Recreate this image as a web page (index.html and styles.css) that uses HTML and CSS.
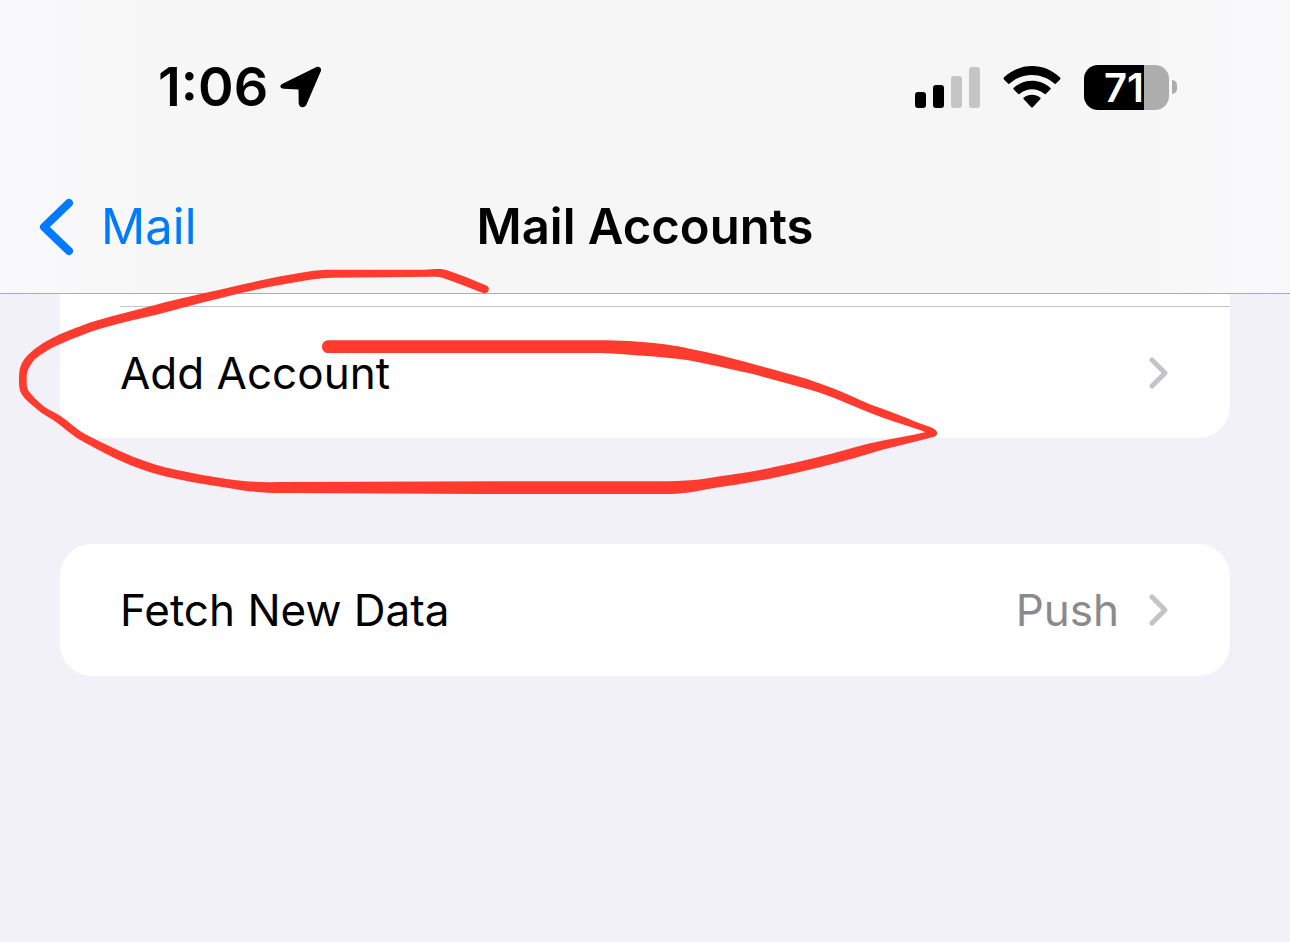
FILE: index.html
```html
<!DOCTYPE html>
<html lang="en">
<head>
    <meta charset="UTF-8">
    <meta name="viewport" content="width=device-width, initial-scale=1.0">
    <title>Mail Accounts</title>
    <link rel="stylesheet" href="styles.css">
</head>
<body>
    <header class="header">
        <div class="status-bar">
            <div class="clock">
                <span>1:06</span>
                <svg class="location" width="42" height="42" viewBox="0 0 42 42">
                    <path d="M3 17.500 L36 1.200 C39 -.2 42 2 40.800 5.200 L26.500 38.500 C24.800 42.500 19 42 18.700 37.500 L18.500 23.500 L4 22.800 C-.5 22.500 -.8 19.200 3 17.500 Z"/>
                </svg>
            </div>
            <div class="status-icons">
                <svg width="65" height="41" viewBox="0 0 65 41">
                    <rect x="0" y="25" width="11" height="16" rx="3"/>
                    <rect x="18" y="18" width="11" height="23" rx="3"/>
                    <rect class="signal-off" x="36" y="9" width="11" height="32" rx="3"/>
                    <rect class="signal-off" x="54" y="0" width="11" height="41" rx="3"/>
                </svg>
                <svg width="58" height="42" viewBox="0 0 58 42">
                    <path d="M1 11.500 C17 -3.800 41 -3.800 57 11.500 Q58 12.500 57 13.500 L53 17.600 Q52.200 18.300 51.300 17.500 C38.500 6 19.500 6 6.700 17.500 Q5.800 18.300 5 17.600 L1 13.500 Q0 12.500 1 11.500 Z"/>
                    <path d="M10.800 21.700 C21 12.400 37 12.400 47.200 21.700 Q48.200 22.600 47.200 23.600 L43 27.800 Q42.200 28.600 41.200 27.700 C34.300 21.700 23.700 21.700 16.800 27.700 Q15.800 28.600 15 27.800 L10.800 23.600 Q9.800 22.600 10.800 21.700 Z"/>
                    <path d="M20.900 31.400 C25.500 27.900 32.500 27.900 37.100 31.400 Q38.100 32.300 37.200 33.300 L30 41 Q29 42 28 41 L20.800 33.300 Q19.900 32.300 20.900 31.400 Z"/>
                </svg>
                <div class="battery">
                    <div class="battery-body">71</div>
                    <div class="battery-cap"></div>
                </div>
            </div>
        </div>
        <nav class="nav-bar">
            <a class="back" href="#">
                <svg width="34" height="58" viewBox="0 0 34 58">
                    <path d="M30 5 L5 29 L30 53"/>
                </svg>
                <span>Mail</span>
            </a>
            <h1 class="title">Mail Accounts</h1>
        </nav>
    </header>

    <main class="settings">
        <section class="group group-cut">
            <a class="row row-line" href="#">
                <span class="label">Add Account</span>
                <svg class="chevron" width="20" height="32" viewBox="0 0 20 32">
                    <path d="M3 3 L16 16 L3 29"/>
                </svg>
            </a>
        </section>
        <section class="group">
            <a class="row" href="#">
                <span class="label">Fetch New Data</span>
                <span class="value">Push</span>
                <svg class="chevron" width="20" height="32" viewBox="0 0 20 32">
                    <path d="M3 3 L16 16 L3 29"/>
                </svg>
            </a>
        </section>
    </main>

    <!-- red marker loop around Add Account -->
    <svg class="marker" width="922" height="234" viewBox="18 264 922 234">
        <path d="M328 340.300 H600 C640 340.500 675 345 687 348.300 C710 352.500 735 359 753 364 C780 371.500 803 377 820 383.500 C840 390.500 855 398 873 405.500 C890 411 912 420.500 928 426.300 C940 430 939 436 932 437.300 C915 442 900 445.500 883 449.500 C873 452.500 863 455.500 853 458.500 C827 466 800 472 773 478 C750 483 730 485.500 707 489.300 C692 492.500 680 494 667 494 L480 494 L283 493 C260 493 245 491 227 487.700 C210 485 193 482.500 177 479 C160 475.500 145 471 130 465 C113 458 97 449 82 441 C72 435.500 65 428.500 57 422.700 C51 418.500 46 416 40 411.700 C33 406 25 400 21 393.300 C19 388 18.800 384 19 380 C19 370 20 365 25 358.300 C32 350 41 344 50 339.300 C63 332 76 328 90 322.500 C115 314.500 141 309 167 301.700 C191 296 216 290.500 240 285 C262 280 285 275 307 271.700 C316 270.300 324 269.700 333 269.700 H425 C433 269.500 440 268 447 270.300 C460 274.500 474 280.500 487 285.700 C491 288 488 295 483 293 C470 288 456 282.500 443 278 C440 277 437 276.500 433 276.700 L333 277.700 C324 277.700 316 278.500 307 280.300 C285 284 262 288 240 293.300 C216 299.500 191 305 167 312 C141 318.500 115 323.500 90 332 C77 337 65 341.500 53 347.300 C45 352 36 357 32 362.700 C27 370 26.500 374 26.700 380 C26.700 385 26.700 388 28.300 390.700 C33 397 39 402 45 407.300 C50 410.500 55 412.500 60 415.700 C69 421.500 76 429 85 434 C100 442 117 450 133 456.700 C148 462.500 162 467 177 470 C194 473.500 210 476.500 227 479 C245 482 264 482.500 283 482 L500 481.300 H667 C680 481 692 480.500 703 479 C727 475 750 472.500 773 467.300 C800 462 827 455 853 447.700 C863 445 873 442.500 883 440.500 C898 438 911 435.500 925 432.300 C921 430 917 429.500 913 427.800 C900 423.500 886 419 873 414 C856 407 838 399 820 392.700 C798 386.500 775 380.500 753 374 C731 369.500 709 364 687 360 C673 358 660 357 647 356 C631 355 616 353.300 600 353 H328 C320 352.500 320 340.800 328 340.300 Z"/>
    </svg>
</body>
</html>
```
FILE: styles.css
```css
* {
    box-sizing: border-box;
}

body {
    margin: 0;
    min-height: 100vh;
    position: relative;
    background: #f2f1f8;
    color: #000;
    font-family: Inter, "Liberation Sans", sans-serif;
}

a {
    color: inherit;
    text-decoration: none;
}

svg {
    display: block;
    flex: none;
}

.header {
    background: linear-gradient(to right, #f9f9fb, #f6f6f6 20%, #f6f6f6 80%, #f9f9fb);
    border-bottom: 1px solid #adadb0;
}

.status-bar {
    display: flex;
    justify-content: space-between;
    align-items: center;
    height: 160px;
    padding: 14px 113px 0 158px;
}

.clock {
    display: flex;
    align-items: center;
    gap: 12px;
    font-size: 54px;
    font-weight: 600;
    line-height: 64px;
}

.status-icons {
    display: flex;
    align-items: center;
    gap: 23px;
}

.signal-off {
    fill: #c5c5c5;
}

.battery {
    display: flex;
    align-items: center;
    gap: 3px;
}

.battery-body {
    width: 85px;
    height: 45px;
    padding-left: 20px;
    border-radius: 14px;
    background: linear-gradient(to right, #000 60px, #adadad 60px);
    color: #fff;
    font-size: 40px;
    font-weight: 600;
    line-height: 45px;
}

.battery-cap {
    width: 5px;
    height: 14px;
    border-radius: 0 7px 7px 0;
    background: #adadad;
}

.nav-bar {
    display: grid;
    grid-template-columns: 1fr auto 1fr;
    align-items: center;
    height: 133px;
    padding: 0 39px;
    line-height: 60px;
}

.back {
    display: flex;
    align-items: center;
    gap: 28px;
    color: #007aff;
    font-size: 49px;
}

.back path {
    fill: none;
    stroke: #007aff;
    stroke-width: 8;
    stroke-linecap: round;
    stroke-linejoin: round;
}

.title {
    margin: 0;
    font-size: 49px;
    font-weight: 600;
}

.settings {
    display: flex;
    flex-direction: column;
    gap: 106px;
    padding: 0 60px;
}

.group {
    border-radius: 32px;
    background: #fff;
}

/* scrolled under the header */
.group-cut {
    padding-top: 12px;
    border-radius: 0 0 32px 32px;
}

.row {
    display: flex;
    align-items: center;
    gap: 30px;
    height: 132px;
    margin-left: 60px;
    padding-right: 61px;
    font-size: 44px;
    line-height: 56px;
}

.row-line {
    border-top: 1px solid #c4c4c6;
}

.label {
    flex: 1;
}

.value {
    color: #8a8a8e;
}

.chevron path {
    fill: none;
    stroke: #c4c4c6;
    stroke-width: 5;
    stroke-linecap: round;
    stroke-linejoin: round;
}

.marker {
    position: absolute;
    left: 18px;
    top: 264px;
    fill: #ff3b30;
    pointer-events: none;
}
```
